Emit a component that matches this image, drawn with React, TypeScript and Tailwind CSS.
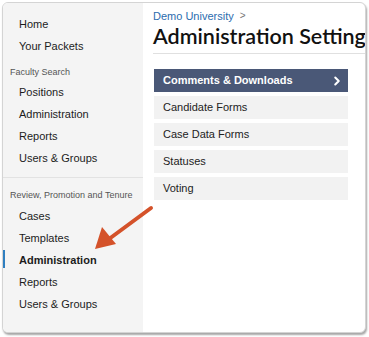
import { ChevronRight } from "lucide-react";

const font = { fontFamily: '"Liberation Sans", Arial, sans-serif' };

const SideItem = ({ label, active }: { label: string; active?: boolean }) => (
  <div className="relative h-[22px] flex items-center pl-[16px] text-[11px] text-[#1c1c1c]">
    {active && <div className="absolute left-[-1px] top-[1px] h-[18px] w-[3px] bg-[#2f7fc0]" />}
    <span className={active ? "font-bold" : ""}>{label}</span>
  </div>
);

const Row = ({ label }: { label: string }) => (
  <div className="h-[23px] flex items-center pl-[9px] bg-[#f2f2f2] text-[11px] text-[#222]">{label}</div>
);

export default function App() {
  return (
    <div className="w-[369px] h-[337px] bg-white p-[2px]" style={font}>
      <div className="relative w-[364px] h-[331px] rounded-[6px] border border-[#d4d4d4] shadow-[1px_2px_2px_rgba(0,0,0,0.35)] overflow-hidden flex bg-white">
        <div className="w-[140px] bg-[#f4f4f4] pt-[10px]">
          <SideItem label="Home" />
          <SideItem label="Your Packets" />
          <div className="h-[24px] pt-[7px] flex items-center pl-[7px] text-[9px] text-[#555]">Faculty Search</div>
          <SideItem label="Positions" />
          <SideItem label="Administration" />
          <SideItem label="Reports" />
          <SideItem label="Users &amp; Groups" />
          <div className="mt-[8px] border-t border-[#e2e2e2]" />
          <div className="h-[27px] pt-[9px] flex items-center pl-[7px] text-[9px] text-[#555]">
            Review, Promotion and Tenure
          </div>
          <SideItem label="Cases" />
          <SideItem label="Templates" />
          <SideItem label="Administration" active />
          <SideItem label="Reports" />
          <SideItem label="Users &amp; Groups" />
        </div>
        <div className="flex-1 pl-[10px] pt-[7px] overflow-hidden">
          <div className="flex items-center gap-[6px] text-[11px] leading-[12px] text-[#2b6cae]">
            <span>Demo University</span>
            <span className="text-[#777] text-[10px]">&gt;</span>
          </div>
          <div
            className="mt-[1px] text-[21.5px] leading-[26px] font-semibold text-[#111] whitespace-nowrap"
            style={{ fontFamily: 'Lato, "Liberation Sans", sans-serif' }}
          >
            Administration Settings
          </div>
          <div className="mt-[4px] border-t border-[#e0e0e0]" />
          <div className="mt-[15px] ml-[1px] w-[194px] flex flex-col gap-[4px]">
            <div className="h-[23px] flex items-center justify-between pl-[9px] pr-[4px] bg-[#4a5877] text-white text-[11px] font-bold">
              <span>Comments &amp; Downloads</span>
              <ChevronRight size={14} strokeWidth={3.5} />
            </div>
            <Row label="Candidate Forms" />
            <Row label="Case Data Forms" />
            <Row label="Statuses" />
            <Row label="Voting" />
          </div>
        </div>
        <svg className="absolute left-0 top-0" width="364" height="331" viewBox="2 2 364 331">
          <line x1="150" y1="207" x2="108" y2="238" stroke="#d4522a" strokeWidth="4" strokeLinecap="round" />
          <polygon points="94,248 101,226 115,243" fill="#d4522a" />
        </svg>
      </div>
    </div>
  );
}
